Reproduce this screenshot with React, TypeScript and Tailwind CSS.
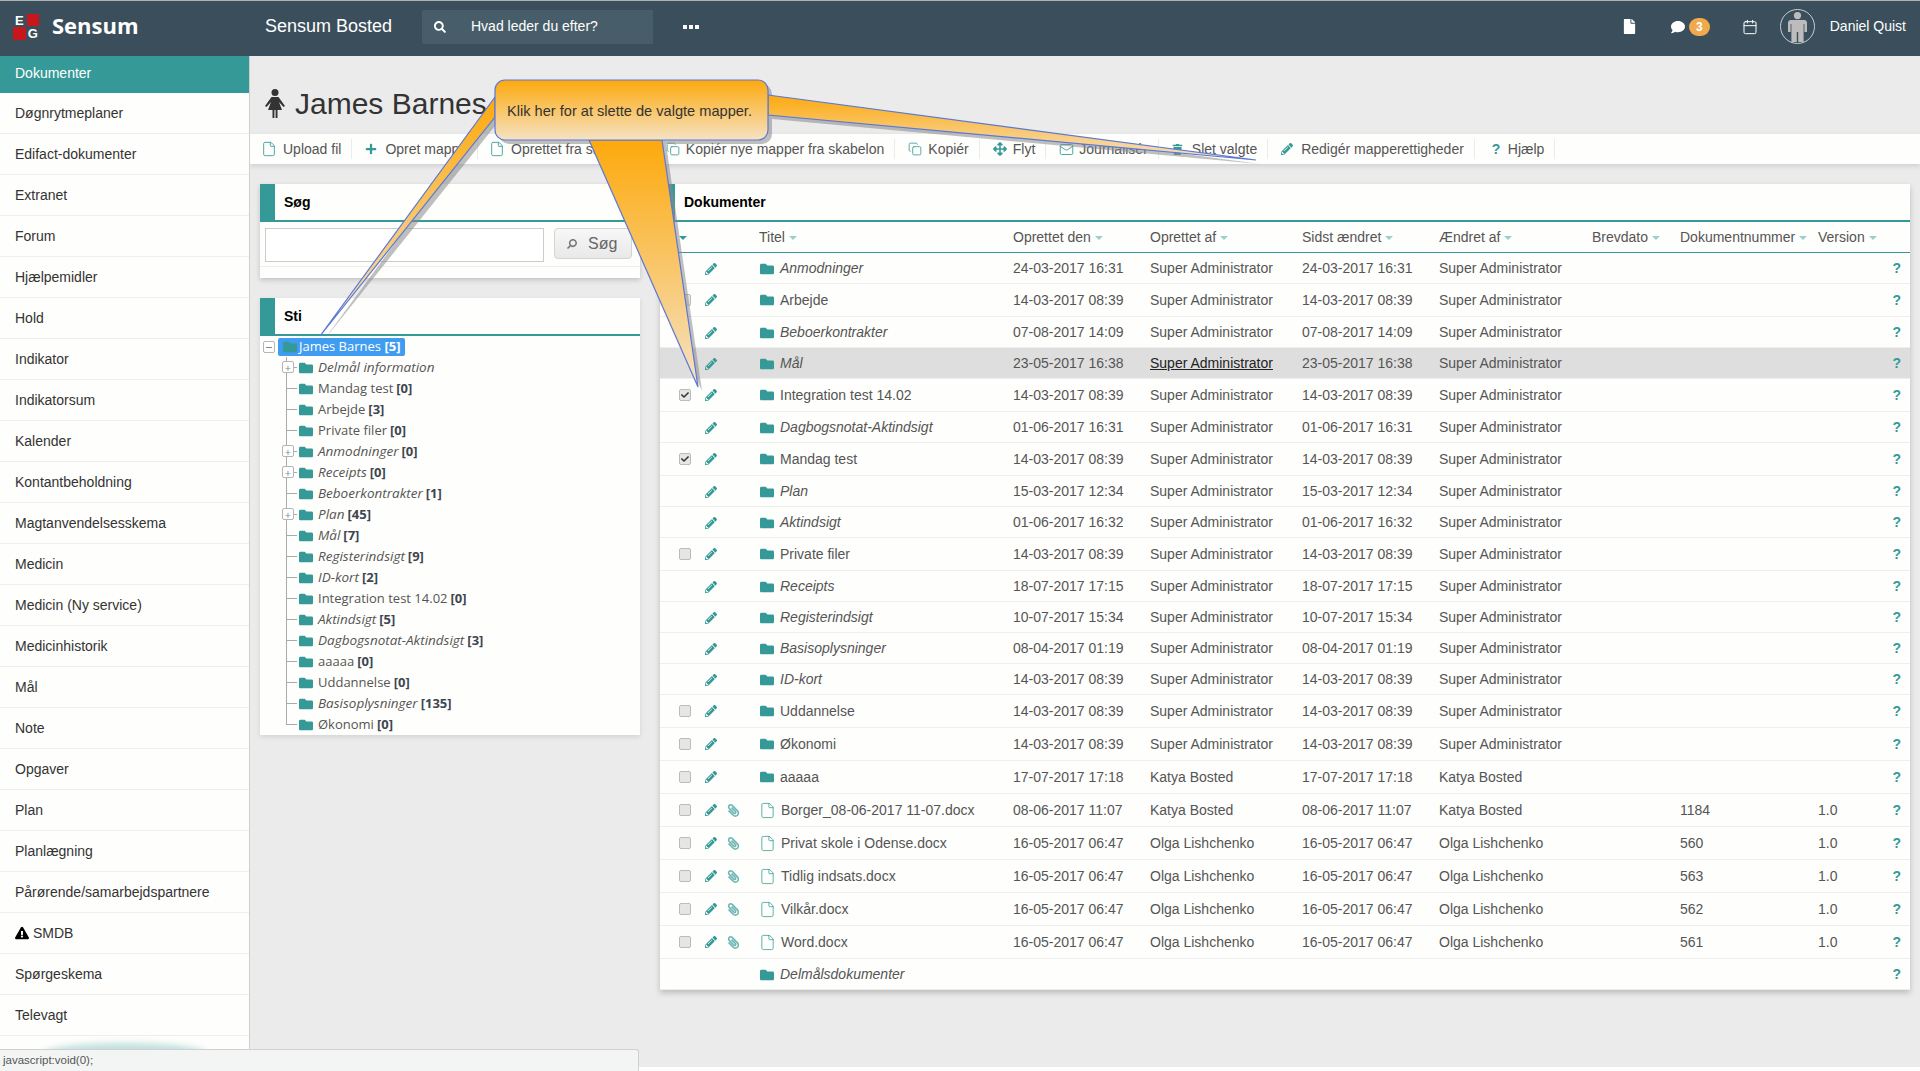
import { Calendar, Copy, File as FileIcon, Mail } from "lucide-react";
import {
  FaArrowsAlt,
  FaCheck,
  FaComment,
  FaExclamationTriangle,
  FaFile,
  FaFolder,
  FaPaperclip,
  FaPencilAlt,
  FaPlus,
  FaSearch,
  FaTrash,
} from "react-icons/fa";

type Row = {
  title: string;
  italic?: boolean;
  created: string;
  by: string;
  changed?: string;
  changedBy?: string;
  check?: "on" | "off";
  file?: boolean;
  no?: string;
  noPencil?: boolean;
  active?: boolean;
};

const SA = "Super Administrator";
const KB = "Katya Bosted";
const OL = "Olga Lishchenko";

const rows: Row[] = [
  { title: "Anmodninger", italic: true, created: "24-03-2017 16:31", by: SA },
  { title: "Arbejde", created: "14-03-2017 08:39", by: SA, check: "off" },
  { title: "Beboerkontrakter", italic: true, created: "07-08-2017 14:09", by: SA },
  { title: "Mål", italic: true, created: "23-05-2017 16:38", by: SA, active: true },
  { title: "Integration test 14.02", created: "14-03-2017 08:39", by: SA, check: "on" },
  { title: "Dagbogsnotat-Aktindsigt", italic: true, created: "01-06-2017 16:31", by: SA },
  { title: "Mandag test", created: "14-03-2017 08:39", by: SA, check: "on" },
  { title: "Plan", italic: true, created: "15-03-2017 12:34", by: SA },
  { title: "Aktindsigt", italic: true, created: "01-06-2017 16:32", by: SA },
  { title: "Private filer", created: "14-03-2017 08:39", by: SA, check: "off" },
  { title: "Receipts", italic: true, created: "18-07-2017 17:15", by: SA },
  { title: "Registerindsigt", italic: true, created: "10-07-2017 15:34", by: SA },
  { title: "Basisoplysninger", italic: true, created: "08-04-2017 01:19", by: SA },
  { title: "ID-kort", italic: true, created: "14-03-2017 08:39", by: SA },
  { title: "Uddannelse", created: "14-03-2017 08:39", by: SA, check: "off" },
  { title: "Økonomi", created: "14-03-2017 08:39", by: SA, check: "off" },
  { title: "aaaaa", created: "17-07-2017 17:18", by: KB, check: "off" },
  { title: "Borger_08-06-2017 11-07.docx", created: "08-06-2017 11:07", by: KB, check: "off", file: true, no: "1184" },
  { title: "Privat skole i Odense.docx", created: "16-05-2017 06:47", by: OL, check: "off", file: true, no: "560" },
  { title: "Tidlig indsats.docx", created: "16-05-2017 06:47", by: OL, check: "off", file: true, no: "563" },
  { title: "Vilkår.docx", created: "16-05-2017 06:47", by: OL, check: "off", file: true, no: "562" },
  { title: "Word.docx", created: "16-05-2017 06:47", by: OL, check: "off", file: true, no: "561" },
  { title: "Delmålsdokumenter", italic: true, created: "", by: "", noPencil: true },
];

const menu = [
  "Døgnrytmeplaner",
  "Edifact-dokumenter",
  "Extranet",
  "Forum",
  "Hjælpemidler",
  "Hold",
  "Indikator",
  "Indikatorsum",
  "Kalender",
  "Kontantbeholdning",
  "Magtanvendelsesskema",
  "Medicin",
  "Medicin (Ny service)",
  "Medicinhistorik",
  "Mål",
  "Note",
  "Opgaver",
  "Plan",
  "Planlægning",
  "Pårørende/samarbejdspartnere",
  "SMDB",
  "Spørgeskema",
  "Televagt",
];

const tree = [
  { name: "Delmål information", italic: true, plus: true },
  { name: "Mandag test", count: 0 },
  { name: "Arbejde", count: 3 },
  { name: "Private filer", count: 0 },
  { name: "Anmodninger", italic: true, count: 0, plus: true },
  { name: "Receipts", italic: true, count: 0, plus: true },
  { name: "Beboerkontrakter", italic: true, count: 1 },
  { name: "Plan", italic: true, count: 45, plus: true },
  { name: "Mål", italic: true, count: 7 },
  { name: "Registerindsigt", italic: true, count: 9 },
  { name: "ID-kort", italic: true, count: 2 },
  { name: "Integration test 14.02", count: 0 },
  { name: "Aktindsigt", italic: true, count: 5 },
  { name: "Dagbogsnotat-Aktindsigt", italic: true, count: 3 },
  { name: "aaaaa", count: 0 },
  { name: "Uddannelse", count: 0 },
  { name: "Basisoplysninger", italic: true, count: 135 },
  { name: "Økonomi", count: 0 },
];

const toolbar = [
  { label: "Upload fil", icon: <FileIcon size={16} strokeWidth={1.3} className="-ml-[2px]" /> },
  { label: "Opret mappe", icon: <FaPlus size={12} /> },
  { label: "Oprettet fra skabelon", icon: <FileIcon size={16} strokeWidth={1.3} className="-ml-[2px]" /> },
  { label: "Kopiér nye mapper fra skabelon", icon: <Copy size={14} strokeWidth={1.4} /> },
  { label: "Kopiér", icon: <Copy size={14} strokeWidth={1.4} /> },
  { label: "Flyt", icon: <FaArrowsAlt size={14} /> },
  { label: "Journalisér", icon: <Mail size={15} strokeWidth={1.4} /> },
  { label: "Slet valgte", icon: <FaTrash size={11} /> },
  { label: "Redigér mapperettigheder", icon: <FaPencilAlt size={12} /> },
  { label: "Hjælp", icon: <span className="pl-[4px] text-[14px] font-bold">?</span> },
];

const columns = "grid grid-cols-[100px_253px_137px_152px_137px_153px_88px_138px_92px]";

function Caret({ dark }: { dark?: boolean }) {
  return (
    <span
      className={`ml-[4px] inline-block h-0 w-0 border-x-[4px] border-t-[4px] border-x-transparent align-middle ${
        dark ? "border-t-[#359a97]" : "border-t-[#9ccfcc]"
      }`}
    />
  );
}

function PanelHead({ title }: { title: string }) {
  return (
    <div className="flex h-[38px] items-center border-b-2 border-[#359a97] bg-[#fefefc]">
      <div className="h-full w-[15px] bg-[#359a97]" />
      <b className="ml-[9px] text-[14px] text-black">{title}</b>
    </div>
  );
}

function Logo() {
  return (
    <div className="grid h-[26px] w-[26px] grid-cols-2 grid-rows-2 gap-px text-[13px] leading-[13px] font-bold text-white">
      <span className="text-center">E</span>
      <span className="bg-[#c8161d]" />
      <span className="bg-[#c8161d]" />
      <span className="text-center">G</span>
    </div>
  );
}

// grey person inside the round avatar
function PersonIcon() {
  return (
    <svg width="19" height="30" viewBox="0 0 19 30" fill="#bcbcbc">
      <circle cx="9.5" cy="3.6" r="3.6" />
      <path d="M3 8 H16 Q19 8 19 11 V20 H16.4 V12 H15.6 V30 H10.2 V20 H8.8 V30 H3.4 V12 H2.6 V20 H0 V11 Q0 8 3 8 Z" />
    </svg>
  );
}

function TopBar() {
  return (
    <header className="flex h-[56px] shrink-0 items-center border-t border-[#aeb2b4] bg-[#3a4f5b] pb-[4px] text-white">
      <div className="ml-[13px] flex w-[252px] items-center gap-[13px]">
        <Logo />
        <span className="-mt-[4px] font-[Open_Sans,sans-serif] text-[22px] leading-none font-bold">Sensum</span>
      </div>
      <span className="w-[157px] text-[18px]">Sensum Bosted</span>
      <div className="flex h-[34px] w-[231px] items-center rounded-l-[2px] bg-[#475e6a] text-[14px]">
        <FaSearch size={12} className="ml-[12px]" />
        <span className="ml-[25px]">Hvad leder du efter?</span>
      </div>
      <span className="ml-[30px] flex gap-[2px]">
        <i className="h-[4px] w-[4px] bg-white" />
        <i className="h-[4px] w-[4px] bg-white" />
        <i className="h-[4px] w-[4px] bg-white" />
      </span>
      <div className="ml-auto flex items-center">
        <FaFile size={15} />
        <FaComment size={14} className="ml-[34px]" />
        <span className="ml-[4px] flex h-[18px] w-[21px] items-center justify-center rounded-full bg-[#f0a94c] text-[12px] font-bold">
          3
        </span>
        <Calendar size={16} strokeWidth={1.5} className="ml-[32px]" />
        <span className="ml-[22px] flex h-[35px] w-[35px] items-center justify-center rounded-full border border-[#c8ccce]">
          <PersonIcon />
        </span>
        <span className="mr-[14px] ml-[15px] text-[14px]">Daniel Quist</span>
      </div>
    </header>
  );
}

function Sidebar() {
  return (
    <nav className="relative w-[250px] shrink-0 overflow-hidden border-r border-[#cfcfcf] bg-[#fefefc] text-[14px] text-[#333]">
      <div className="flex h-[37px] items-center bg-[#359a97] pb-[3px] pl-[15px] text-white">Dokumenter</div>
      {menu.map((item) => (
        <div key={item} className="flex h-[41px] items-center border-b border-[#eeeeee] pl-[15px]">
          {item === "SMDB" && <FaExclamationTriangle size={14} className="mr-[4px] text-black" />}
          {item}
        </div>
      ))}
      <div className="mx-auto mt-[7px] h-[20px] w-[160px] rounded-[50%] bg-[#359a97] opacity-30 blur-[3px]" />
    </nav>
  );
}

function Toolbar() {
  return (
    <div className="flex h-[30px] shrink-0 items-center bg-[#fefefc] text-[14px] text-[#555] shadow-[0_2px_5px_rgba(0,0,0,0.12)]">
      {toolbar.map((t) => (
        <div key={t.label} className="flex h-[20px] items-center border-r border-[#ececec] pr-[10px] pl-[13px]">
          <span className="flex w-[20px] text-[#359a97]">{t.icon}</span>
          {t.label}
        </div>
      ))}
    </div>
  );
}

function SearchPanel() {
  return (
    <section className="h-[94px] bg-[#fefefc] shadow-[0_2px_5px_rgba(0,0,0,0.18)]">
      <PanelHead title="Søg" />
      <div className="flex h-[45px] gap-[10px] border-b border-[#eeeeee] pt-[6px] pl-[5px]">
        <div className="h-[34px] w-[279px] border border-[#ccc] bg-white" />
        <button className="flex h-[31px] w-[78px] items-center rounded-[4px] border border-[#d4d4d4] bg-gradient-to-b from-[#f7f7f7] to-[#e9e9e9] pl-[12px] text-[16px] text-[#666]">
          <FaSearch size={10} className="-scale-x-100 text-[#777]" />
          <span className="ml-[11px]">Søg</span>
        </button>
      </div>
    </section>
  );
}

function TreePanel() {
  return (
    <section className="h-[437px] bg-[#fefefc] shadow-[0_2px_5px_rgba(0,0,0,0.1)]">
      <PanelHead title="Sti" />
      <div className="font-[Open_Sans,sans-serif] text-[13px] text-[#555]">
        <div className="relative mt-[1px] flex h-[19px] items-center pl-[18px]">
          <span className="absolute top-[4px] left-[3px] flex h-[12px] w-[12px] items-center justify-center rounded-[2px] border border-[#b5b5b5] bg-white">
            <i className="h-px w-[6px] bg-[#888]" />
          </span>
          <span className="flex h-[18px] w-[127px] items-center rounded-[2px] bg-[#3f9cf0] pl-[5px] text-white">
            <FaFolder size={14} className="mr-[2px] text-[#359a97]" />
            James Barnes&nbsp;<b>[5]</b>
          </span>
        </div>
        <ul className="mt-[1px] ml-[26px]">
          {tree.map((node, i) => {
            const last = i === tree.length - 1;
            return (
              <li
                key={node.name}
                className={`relative flex h-[21px] items-center ${last ? "" : "border-l border-[#aaa]"}`}
              >
                <span
                  className={`mr-[2px] h-[11px] self-start border-b border-[#aaa] ${
                    last ? "w-[11px] border-l" : "w-[10px]"
                  }`}
                />
                {node.plus && (
                  <span className="absolute top-[4px] left-[-5px] flex h-[12px] w-[12px] items-center justify-center rounded-[2px] border border-[#b5b5b5] bg-white text-[11px] leading-none text-[#888]">
                    +
                  </span>
                )}
                <FaFolder size={14} className="mr-[5px] text-[#359a97]" />
                <span className={node.italic ? "text-[13.5px] italic" : ""}>{node.name}</span>
                {node.count !== undefined && <b className="ml-[3px] text-[#3d4650]">[{node.count}]</b>}
              </li>
            );
          })}
        </ul>
      </div>
    </section>
  );
}

function DocRow({ row }: { row: Row }) {
  const by2 = row.changedBy ?? row.by;
  return (
    <div
      className={`${columns} items-center border-b border-[#eeeeee] ${row.check ? "h-[33px]" : "h-[31px] pt-px"} ${
        row.active ? "bg-[#dedede]" : ""
      }`}
    >
      <div className="flex items-center pl-[19px] text-[#359a97]">
        <span className="w-[26px]">
          {row.check && (
            <span className="flex h-[12px] w-[12px] items-center justify-center rounded-[2px] border border-[#bbb] bg-[#e6e6e6] text-[#333]">
              {row.check === "on" && <FaCheck size={8} />}
            </span>
          )}
        </span>
        <span className="w-[22px]">{!row.noPencil && <FaPencilAlt size={12} />}</span>
        {row.file && <FaPaperclip size={13} className="-scale-x-100 opacity-70" />}
      </div>
      <div className={`flex items-center ${row.italic ? "italic" : ""}`}>
        {row.file ? (
          <FileIcon size={17} strokeWidth={1.1} className="mr-[5px] -ml-px text-[#359a97]" />
        ) : (
          <FaFolder size={14} className="mr-[6px] text-[#359a97]" />
        )}
        {row.title}
      </div>
      <div>{row.created}</div>
      <div className={row.active ? "text-[#222] underline" : ""}>{row.by}</div>
      <div>{row.changed ?? row.created}</div>
      <div>{by2}</div>
      <div />
      <div>{row.no}</div>
      <div className="flex justify-between pr-[9px]">
        <span>{row.no ? "1.0" : ""}</span>
        <b className="font-bold text-[#359a97]">?</b>
      </div>
    </div>
  );
}

function DocPanel() {
  const heads = ["Oprettet den", "Oprettet af", "Sidst ændret", "Ændret af", "Brevdato", "Dokumentnummer", "Version"];
  return (
    <section className="h-[806px] w-[1250px] bg-[#fefefc] text-[14px] text-[#555] shadow-[0_3px_6px_rgba(0,0,0,0.2)]">
      <PanelHead title="Dokumenter" />
      <div className={`${columns} h-[31px] items-center border-b border-[#359a97] pt-px`}>
        <div className="pl-[15px]">
          <Caret dark />
        </div>
        <div className="-ml-px">
          Titel
          <Caret />
        </div>
        {heads.map((h) => (
          <div key={h} className="whitespace-nowrap">
            {h}
            <Caret />
          </div>
        ))}
      </div>
      {rows.map((row) => (
        <DocRow key={row.title} row={row} />
      ))}
    </section>
  );
}

// woman figure next to the name, wider than the fa one
function FemaleIcon() {
  return (
    <svg width="20" height="29" viewBox="0 0 20 29" fill="#333">
      <circle cx="10" cy="3.5" r="3.5" />
      <path d="M6.5 8 H13.5 L20 17 L18.5 18 L14 13 L17 21 H12.5 V29 H10.6 V21 H9.4 V29 H7.5 V21 H3 L6 13 L1.5 18 L0 17 Z" />
    </svg>
  );
}

// speech bubble from the help overlay, three tails pointing at tree, rows and toolbar
function Callout() {
  const tails = [
    "495,97 320,336 495,117",
    "589,140 698,387 662,140",
    "768,95 1256,160 768,115",
  ];
  return (
    <>
      <svg className="pointer-events-none absolute top-0 left-0" width="1920" height="1071">
        <defs>
          <linearGradient id="bubble" x1="0" y1="0" x2="0" y2="1">
            <stop offset="0" stopColor="#fda90c" />
            <stop offset="1" stopColor="#f5e2c4" />
          </linearGradient>
        </defs>
        <g fill="#8a8a8a" opacity="0.55" transform="translate(4 4)">
          {tails.map((p) => (
            <polygon key={p} points={p} />
          ))}
          <rect x="495" y="80" width="273" height="60" rx="10" />
        </g>
        {tails.map((p) => (
          <polygon key={p} points={p} fill="url(#bubble)" stroke="#5b78d6" strokeWidth="1.2" />
        ))}
        <rect x="495" y="80" width="273" height="60" rx="10" fill="url(#bubble)" stroke="#5b78d6" strokeWidth="1.2" />
      </svg>
      <div className="absolute top-[102px] left-[507px] text-[14.6px] leading-[18px] text-[#333]">
        Klik her for at slette de valgte mapper.
      </div>
    </>
  );
}

export default function App() {
  return (
    <div className="relative flex h-[1071px] w-[1920px] flex-col overflow-hidden bg-[#ebebeb] font-[Liberation_Sans,Arial,sans-serif]">
      <TopBar />
      <div className="flex min-h-0 flex-1">
        <Sidebar />
        <main className="flex min-w-0 flex-1 flex-col">
          <div className="flex h-[78px] shrink-0 items-center gap-[10px] pt-[16px] pl-[15px] text-[30px] text-[#333]">
            <FemaleIcon />
            James Barnes
          </div>
          <Toolbar />
          <div className="mt-[20px] flex gap-[20px] pl-[10px]">
            <div className="flex w-[380px] flex-col gap-[20px]">
              <SearchPanel />
              <TreePanel />
            </div>
            <DocPanel />
          </div>
          <div className="mt-auto h-[4px] bg-white" />
        </main>
      </div>
      <div className="absolute bottom-0 left-0 flex h-[22px] w-[639px] items-center rounded-tr-[3px] border-t border-r border-[#d0d0d0] bg-[#f3f4f4] pl-[3px] text-[11.5px] text-[#555]">
        javascript:void(0);
      </div>
      <Callout />
    </div>
  );
}
